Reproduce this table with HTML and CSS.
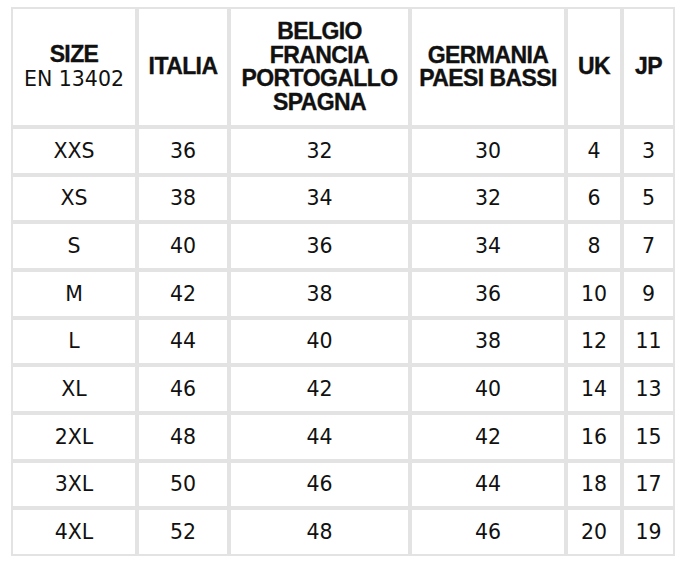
FILE: index.html
```html
<!DOCTYPE html>
<html lang="it">
<head>
<meta charset="utf-8">
<title>Tabella taglie</title>
<link rel="stylesheet" href="styles.css">
</head>
<body>
<table class="sizes">
  <colgroup>
    <col class="c1"><col class="c2"><col class="c3"><col class="c4"><col class="c5"><col class="c6">
  </colgroup>
  <thead>
    <tr class="head">
      <th><span class="strong">SIZE</span><br><span class="sub">EN 13402</span></th>
      <th>ITALIA</th>
      <th>BELGIO<br>FRANCIA<br>PORTOGALLO<br>SPAGNA</th>
      <th>GERMANIA<br>PAESI BASSI</th>
      <th>UK</th>
      <th>JP</th>
    </tr>
  </thead>
  <tbody>
    <tr><td>XXS</td><td>36</td><td>32</td><td>30</td><td>4</td><td>3</td></tr>
    <tr><td>XS</td><td>38</td><td>34</td><td>32</td><td>6</td><td>5</td></tr>
    <tr><td>S</td><td>40</td><td>36</td><td>34</td><td>8</td><td>7</td></tr>
    <tr><td>M</td><td>42</td><td>38</td><td>36</td><td>10</td><td>9</td></tr>
    <tr><td>L</td><td>44</td><td>40</td><td>38</td><td>12</td><td>11</td></tr>
    <tr><td>XL</td><td>46</td><td>42</td><td>40</td><td>14</td><td>13</td></tr>
    <tr><td>2XL</td><td>48</td><td>44</td><td>42</td><td>16</td><td>15</td></tr>
    <tr><td>3XL</td><td>50</td><td>46</td><td>44</td><td>18</td><td>17</td></tr>
    <tr><td>4XL</td><td>52</td><td>48</td><td>46</td><td>20</td><td>19</td></tr>
  </tbody>
</table>
</body>
</html>
```

FILE: styles.css
```css
html, body {
  margin: 0;
  padding: 0;
  background: #ffffff;
}

.sizes {
  margin: 7px 0 0 11px;
  border-collapse: separate;
  border-spacing: 0;
  table-layout: fixed;
  width: 664px;
  color: #111111;
}

.c1 { width: 126px; }
.c2 { width: 92px; }
.c3 { width: 181px; }
.c4 { width: 156px; }
.c5 { width: 56px; }
.c6 { width: 53px; }

.sizes th,
.sizes td {
  border: 2px solid #e3e3e3;
  padding: 0;
  text-align: center;
  vertical-align: middle;
  box-sizing: border-box;
}

.sizes th {
  font-family: "Liberation Sans", Arial, sans-serif;
  font-weight: bold;
  font-size: 23px;
  line-height: 23.5px;
  letter-spacing: -0.6px;
  -webkit-text-stroke: 0.35px #111111;
}

.sizes .sub {
  font-family: "DejaVu Sans", sans-serif;
  font-weight: normal;
  font-size: 20.5px;
  letter-spacing: 0;
  -webkit-text-stroke: 0;
}

.sizes td {
  font-family: "DejaVu Sans", sans-serif;
  font-size: 20.5px;
}

.head {
  height: 120px;
}

tbody tr {
  height: 47.67px;
}
```
